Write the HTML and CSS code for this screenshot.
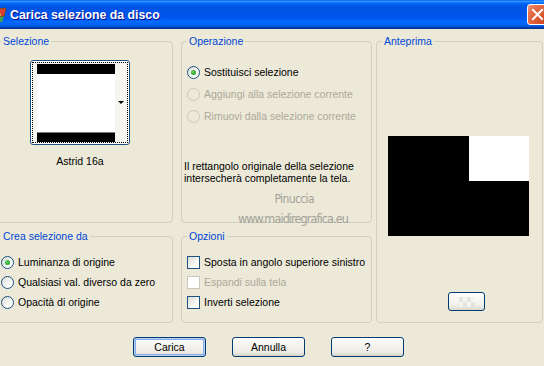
FILE: index.html
```html
<!DOCTYPE html>
<html lang="it">
<head>
<meta charset="utf-8">
<title>Carica selezione da disco</title>
<link rel="stylesheet" href="styles.css">
</head>
<body>
<div class="window">
  <div class="titlebar">
    <svg class="app-icon" width="16" height="16" viewBox="0 0 16 16">
      <path d="M1 3 L15 1 L13 9 L3 10 Z" fill="#f4c64a"/>
      <path d="M3 10 L13 9 L11 15 L5 15 Z" fill="#3fa44a"/>
      <path d="M8 2 L15 1 L13 9 L10 9 Z" fill="#d9412e"/>
      <path d="M1 3 L15 1 L13 9 L3 10 Z" fill="none" stroke="#7a3b10" stroke-width="0.8"/>
    </svg>
    <span class="title">Carica selezione da disco</span>
    <div class="close">
      <svg width="21" height="21" viewBox="0 0 21 21">
        <path d="M6 6 L15 15 M15 6 L6 15" stroke="#fff" stroke-width="2" stroke-linecap="square"/>
      </svg>
    </div>
  </div>
  <div class="content">
    <div class="groups">
      <fieldset class="group g-sel">
        <legend>Selezione</legend>
        <div class="thumb-wrap">
          <div class="thumb">
            <div class="thumb-focus">
              <div class="thumb-img"></div>
              <span class="thumb-arrow"></span>
            </div>
          </div>
          <div class="thumb-name">Astrid 16a</div>
        </div>
      </fieldset>

      <fieldset class="group g-op">
        <legend>Operazione</legend>
        <div class="options op-list">
          <div class="opt"><span class="radio checked"></span><span>Sostituisci selezione</span></div>
          <div class="opt disabled"><span class="radio"></span><span>Aggiungi alla selezione corrente</span></div>
          <div class="opt disabled"><span class="radio"></span><span>Rimuovi dalla selezione corrente</span></div>
        </div>
        <p class="op-note">Il rettangolo originale della selezione<br>intersecherà completamente la tela.</p>
        <div class="watermark">
          <span class="wm-name">Pinuccia</span>
          <span class="wm-url">www.maidiregrafica.eu</span>
        </div>
      </fieldset>

      <fieldset class="group g-prev">
        <legend>Anteprima</legend>
        <div class="preview"><div class="preview-white"></div></div>
        <div class="mini-btn"><span class="checker"></span></div>
      </fieldset>

      <fieldset class="group g-crea">
        <legend>Crea selezione da</legend>
        <div class="options low-list">
          <div class="opt row20"><span class="radio checked"></span><span>Luminanza di origine</span></div>
          <div class="opt row20"><span class="radio"></span><span>Qualsiasi val. diverso da zero</span></div>
          <div class="opt row20"><span class="radio"></span><span>Opacità di origine</span></div>
        </div>
      </fieldset>

      <fieldset class="group g-opt">
        <legend>Opzioni</legend>
        <div class="options low-list">
          <div class="opt row20"><span class="check"></span><span>Sposta in angolo superiore sinistro</span></div>
          <div class="opt row20 disabled"><span class="check"></span><span>Espandi sulla tela</span></div>
          <div class="opt row20"><span class="check"></span><span>Inverti selezione</span></div>
        </div>
      </fieldset>
    </div>

    <div class="buttons">
      <button class="btn default">Carica</button>
      <button class="btn">Annulla</button>
      <button class="btn">?</button>
    </div>
  </div>
</div>
</body>
</html>
```

FILE: styles.css
```css
* { box-sizing: border-box; }

html, body {
  margin: 0;
  padding: 0;
  width: 544px;
  height: 366px;
  overflow: hidden;
  background: #ece9d8;
  font-family: "Liberation Sans", Arial, sans-serif;
  font-size: 10.5px;
  color: #000;
}

.window {
  width: 544px;
  height: 366px;
  overflow: hidden;
}

/* Title bar */
.titlebar {
  height: 29px;
  display: flex;
  align-items: center;
  background: linear-gradient(to bottom,
    #0058ee 0%, #3593ff 4%, #288eff 6%, #127dff 8%, #036ffc 10%,
    #0262ee 14%, #0057e5 20%, #0054e3 24%, #0055eb 56%, #005bf5 66%,
    #026afe 76%, #0062ef 86%, #0052d6 92%, #0040ab 94%, #003092 100%);
}

.app-icon {
  flex: none;
  margin-left: -9px;
  margin-top: 1px;
}

.title {
  margin-left: 3px;
  color: #fff;
  font-weight: bold;
  font-size: 12.3px;
  text-shadow: 1px 1px #0f1089;
  letter-spacing: 0;
}

.close {
  margin-left: auto;
  margin-right: -4px;
  width: 21px;
  height: 21px;
  border: 1px solid #fff;
  border-radius: 3px;
  background: radial-gradient(circle at 85% 85%, #cc4622 0%, #dc5b32 35%, #e56d48 70%, #f0977a 100%);
  display: flex;
  align-items: center;
  justify-content: center;
}
.close svg { display: block; margin: -1px; }

/* Content */
.content {
  padding-top: 6px;
}

.groups {
  margin-left: -5px;
  display: grid;
  grid-template-columns: 178px 8px 191px 4px 167px;
  grid-template-rows: 188px 93px;
  row-gap: 7px;
}

.group {
  margin: 0;
  padding: 0;
  min-width: 0;
  border: 1px solid #d0d0bf;
  border-radius: 4px;
  position: relative;
}

.group legend {
  margin-left: 5px;
  padding: 0 2px;
  color: #0046d5;
  line-height: 13px;
  font-size: 10.5px;
}

.g-sel  { grid-column: 1; grid-row: 1; }
.g-op   { grid-column: 3; grid-row: 1; }
.g-prev { grid-column: 5; grid-row: 1 / span 2; }
.g-crea { grid-column: 1; grid-row: 2; }
.g-opt  { grid-column: 3; grid-row: 2; }

/* Selezione */
.thumb-wrap {
  margin-left: 34px;
  margin-top: 12px;
  width: 100px;
  display: flex;
  flex-direction: column;
  align-items: center;
}

.thumb {
  width: 100px;
  height: 85px;
  border: 1px solid #1c5180;
  border-radius: 3px;
  padding: 1px;
  background: #fff;
}

.thumb-focus {
  height: 100%;
  border: 1px dotted #000;
  padding: 1px 3px 1px 4px;
  display: flex;
  align-items: center;
  justify-content: space-between;
  background: #f6f5f0;
}

.thumb-img {
  width: 78px;
  height: 78px;
  background:
    linear-gradient(#000, #000) top / 100% 10px no-repeat,
    linear-gradient(#000, #000) bottom / 100% 9px no-repeat,
    linear-gradient(#777, #777) 0 68px / 100% 1px no-repeat,
    #fff;
}

.thumb-arrow {
  width: 0;
  height: 0;
  border-left: 3px solid transparent;
  border-right: 3px solid transparent;
  border-top: 3px solid #000;
  margin-right: 0;
}

.thumb-name {
  margin-top: 10px;
  line-height: 13px;
  text-align: center;
}

/* Options */
.opt {
  display: flex;
  align-items: center;
  gap: 4px;
  height: 22px;
  white-space: nowrap;
}
.opt.row20 { height: 20px; }
.opt.disabled { color: #aca899; }

.op-list {
  margin-top: 13px;
  margin-left: 5px;
}

.low-list {
  margin-top: 9px;
  margin-left: 5px;
}

.radio {
  flex: none;
  width: 13px;
  height: 13px;
  border-radius: 50%;
  border: 1px solid #1c5180;
  background: linear-gradient(135deg, #dcdcd4, #ffffff 75%);
  display: flex;
  align-items: center;
  justify-content: center;
}
.radio.checked::after {
  content: "";
  width: 5px;
  height: 5px;
  border-radius: 50%;
  background: radial-gradient(circle at 40% 40%, #6bd56b, #21a121 70%);
}
.disabled .radio {
  border-color: #cac8bb;
  background: #ece9d8;
}

.check {
  flex: none;
  width: 13px;
  height: 13px;
  border: 1px solid #1c5180;
  background: linear-gradient(135deg, #dcdcd4, #ffffff 80%);
}
.disabled .check {
  border-color: #cac8bb;
  background: #fff;
}

.op-note {
  margin: 33px 0 0 2px;
  line-height: 12px;
}

/* Watermark overlay */
.watermark {
  position: absolute;
  left: 56px;
  top: 144px;
  display: flex;
  flex-direction: column;
  align-items: flex-end;
  width: 110px;
  color: #a3a198;
  font-family: "DejaVu Sans", sans-serif;
  font-stretch: condensed;
  pointer-events: none;
}
.wm-name {
  font-size: 12px;
  letter-spacing: -0.6px;
  margin-right: 34px;
  line-height: 14px;
}
.wm-url {
  margin-top: 6px;
  font-size: 12.5px;
  letter-spacing: -0.9px;
  line-height: 14px;
}

/* Anteprima */
.preview {
  margin: 88px 0 0 11px;
  width: 141px;
  height: 100px;
  background: #000;
  display: flex;
  justify-content: flex-end;
}
.preview-white {
  width: 60px;
  height: 45px;
  background: #fff;
}

.mini-btn {
  margin: 56px 0 0 71px;
  width: 37px;
  height: 19px;
  border: 1px solid #003c74;
  border-radius: 3px;
  background: linear-gradient(#ffffff, #f1f0ea 70%, #dcd8cc);
  display: flex;
  align-items: center;
  justify-content: center;
}
.checker {
  width: 16px;
  height: 10px;
  background: repeating-conic-gradient(#f4f4f2 0 25%, #e0e0dc 0 50%) 0 0 / 8px 10px;
  opacity: 0.8;
}

/* Buttons */
.buttons {
  margin-top: 14px;
  padding-left: 133px;
  display: flex;
  gap: 26px;
}

.btn {
  width: 73px;
  height: 20px;
  padding: 0;
  border: 1px solid #003c74;
  border-radius: 3px;
  background: linear-gradient(#ffffff 0%, #f4f3ee 40%, #ecebe5 80%, #d6d0c5 100%);
  font-family: "Liberation Sans", Arial, sans-serif;
  font-size: 10.5px;
  color: #000;
}
.btn.default {
  box-shadow: inset 0 0 0 1px #b4cff5, inset 0 0 0 2px #89ade4;
}
```
